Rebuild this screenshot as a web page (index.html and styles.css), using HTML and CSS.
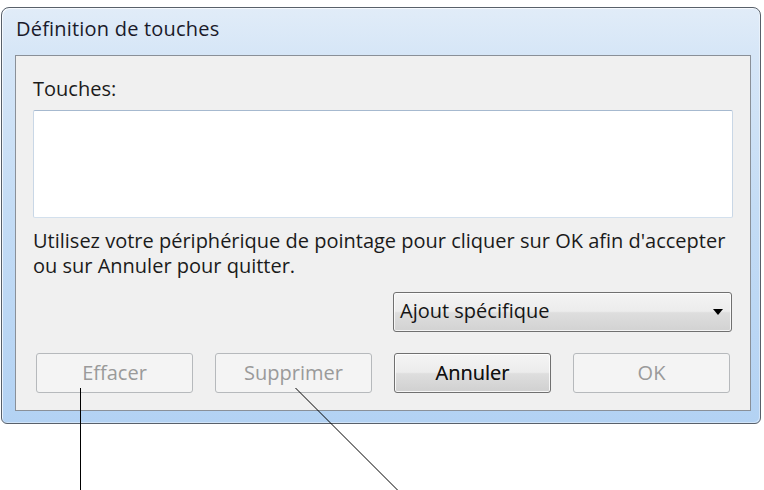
FILE: index.html
```html
<!DOCTYPE html>
<html lang="fr">
<head>
<meta charset="utf-8">
<title>Définition de touches</title>
<link rel="stylesheet" href="styles.css">
</head>
<body>
<div class="window">
  <div class="titlebar">Définition de touches</div>
  <div class="panel">
    <div class="label">Touches:</div>
    <div class="textbox"></div>
    <p class="hint">Utilisez votre périphérique de pointage pour cliquer sur OK afin d'accepter<br>ou sur Annuler pour quitter.</p>
    <div class="combo-row">
      <div class="combo">
        <span class="combo-text">Ajout spécifique</span>
        <svg class="combo-arrow" width="10" height="6" viewBox="0 0 10 6"><path d="M0 0H10L5 6Z" fill="#000"/></svg>
      </div>
    </div>
    <div class="buttons">
      <div class="btn disabled">Effacer</div>
      <div class="btn disabled">Supprimer</div>
      <div class="btn">Annuler</div>
      <div class="btn disabled">OK</div>
    </div>
  </div>
</div>
<svg class="callouts" width="764" height="490" viewBox="0 0 764 490">
  <line x1="80.5" y1="388" x2="80.5" y2="490" stroke="#000" stroke-width="1"/>
  <line x1="295.5" y1="388" x2="397.5" y2="490" stroke="#000" stroke-width="1"/>
</svg>
</body>
</html>
```

FILE: styles.css
```css
html, body {
  margin: 0;
  padding: 0;
  background: #ffffff;
}

body {
  font-family: "Open Sans", "Noto Sans", sans-serif;
  font-size: 20px;
  color: #1b1b1b;
  width: 764px;
  height: 490px;
  overflow: hidden;
  position: relative;
}

.window {
  margin: 7px 0 0 1px;
  width: 760px;
  height: 417px;
  box-sizing: border-box;
  border: 1px solid #58606a;
  border-radius: 8px 8px 6px 6px;
  padding: 0 9px 12px 13px;
  background: linear-gradient(to bottom, #e1ecf8 0px, #d6e6f7 46px, #c4dcf5 200px, #b3d2f3 100%);
  box-shadow: inset 1px 1px 0 rgba(255, 255, 255, 0.7), inset -1px -1px 0 rgba(255, 255, 255, 0.4);
}

.titlebar {
  height: 47px;
  box-sizing: border-box;
  padding: 8px 0 0 1px;
  line-height: 26px;
  letter-spacing: 0.2px;
  color: #1a1a2a;
  white-space: nowrap;
}

.panel {
  width: 736px;
  height: 356px;
  box-sizing: border-box;
  border: 1px solid #8a9098;
  background: #f0f0f0;
  padding: 20px 17px 0 17px;
}

.label {
  line-height: 26px;
  height: 26px;
}

.textbox {
  margin-top: 8px;
  height: 108px;
  box-sizing: border-box;
  background: #ffffff;
  border: 1px solid;
  border-color: #a6b9cf #c9d7e6 #d3e0ed #c9d7e6;
  border-radius: 2px;
}

.hint {
  margin: 10px 0 0 0;
  line-height: 25px;
  white-space: nowrap;
}

.combo-row {
  margin-top: 14px;
  display: flex;
  justify-content: flex-end;
}

.combo {
  width: 339px;
  height: 40px;
  margin-right: 1px;
  box-sizing: border-box;
  border: 1px solid #707070;
  border-radius: 3px;
  background: linear-gradient(to bottom, #f4f4f4 0%, #ececec 48%, #dedede 52%, #d2d2d2 100%);
  box-shadow: inset 0 0 0 1px rgba(255, 255, 255, 0.75);
  display: flex;
  align-items: center;
  justify-content: space-between;
  padding: 0 8px 2px 6px;
}

.combo-text {
  line-height: 36px;
  color: #151515;
}

.combo-arrow {
  display: block;
  margin-top: 2px;
}

.buttons {
  margin-top: 21px;
  margin-left: 3px;
  display: flex;
  gap: 22px;
}

.btn {
  width: 157px;
  height: 40px;
  box-sizing: border-box;
  border: 1px solid #707070;
  border-radius: 3px;
  text-align: center;
  line-height: 38px;
  color: #101010;
  text-shadow: 0 0 0.6px rgba(0, 0, 0, 0.6);
  background: linear-gradient(to bottom, #f4f4f4 0%, #ececec 48%, #dedede 52%, #d0d0d0 100%);
  box-shadow: inset 0 0 0 1px rgba(255, 255, 255, 0.8);
}

.btn.disabled {
  border-color: #b6b9bc;
  background: #f4f4f4;
  color: #9a9a9a;
  text-shadow: none;
  box-shadow: none;
}

.callouts {
  position: absolute;
  left: 0;
  top: 0;
  pointer-events: none;
}
```
